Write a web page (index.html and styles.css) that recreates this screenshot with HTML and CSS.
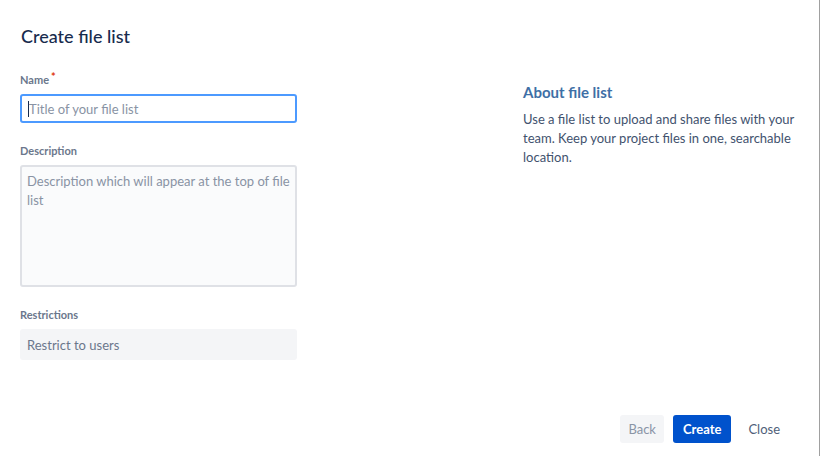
FILE: index.html
```html
<!DOCTYPE html>
<html>
<head>
<meta charset="utf-8">
<link rel="stylesheet" href="styles.css">
</head>
<body>
<div class="dialog">
  <div class="main">
    <div class="left">
      <h1 class="title">Create file list</h1>
      <div class="field">
        <label class="label">Name<span class="req">*</span></label>
        <div class="input focused"><span class="caret"></span><span class="ph">Title of your file list</span></div>
      </div>
      <div class="field">
        <label class="label">Description</label>
        <div class="textarea"><span class="ph">Description which will appear at the top of file list</span></div>
      </div>
      <div class="field">
        <label class="label">Restrictions</label>
        <div class="select"><span class="ph2">Restrict to users</span></div>
      </div>
    </div>
    <div class="right">
      <h2 class="about">About file list</h2>
      <p class="desc">Use a file list to upload and share files with your team. Keep your project files in one, searchable location.</p>
    </div>
  </div>
  <div class="footer">
    <button class="btn back">Back</button>
    <button class="btn create">Create</button>
    <button class="btn close">Close</button>
  </div>
</div>
</body>
</html>
```
FILE: styles.css
```css
html, body {
  margin: 0;
  padding: 0;
  background: #ffffff;
}
body {
  font-family: Lato, "Open Sans", "Liberation Sans", sans-serif;
  color: #172b4d;
}
.dialog {
  width: 820px;
  height: 456px;
  box-sizing: border-box;
  border-right: 1px solid #a0a0a0;
  display: flex;
  flex-direction: column;
}
.main {
  flex: 1;
  display: grid;
  grid-template-columns: 277px 272px;
  column-gap: 226px;
  padding: 0 20px;
}
.title {
  margin: 24px 0 0 1px;
  font-size: 18px;
  line-height: 24px;
  font-weight: 500;
  color: #172b4d;
}
.field {
  margin-top: 24px;
}
.field + .field {
  margin-top: 20px;
}
.label {
  display: block;
  font-size: 11px;
  line-height: 16px;
  font-weight: 700;
  color: #6b778c;
  margin-bottom: 6px;
}
.req {
  color: #de350b;
  margin-left: 2px;
  position: relative;
  top: -3px;
}
.input {
  height: 29px;
  box-sizing: border-box;
  border: 2px solid #4c9aff;
  border-radius: 3px;
  display: flex;
  align-items: center;
  padding: 0 6px;
}
.caret {
  width: 1px;
  height: 16px;
  background: #172b4d;
}
.ph {
  font-size: 13px;
  color: #8993a4;
}
.textarea {
  height: 122px;
  box-sizing: border-box;
  border: 2px solid #dfe1e6;
  border-radius: 3px;
  background: #fafbfc;
  padding: 4px 5px;
  line-height: 18px;
}
.select {
  height: 31px;
  background: #f4f5f7;
  border-radius: 3px;
  display: flex;
  align-items: center;
  padding: 0 7px;
}
.ph2 {
  font-size: 13px;
  color: #6b778c;
}
.right {
  padding-top: 82px;
}
.about {
  margin: 0;
  font-size: 15px;
  line-height: 20px;
  font-weight: 700;
  color: #3e6fa6;
}
.desc {
  margin: 8px 0 0;
  font-size: 13px;
  line-height: 19px;
  color: #42526e;
}
.footer {
  display: flex;
  justify-content: flex-end;
  gap: 9px;
  padding: 0 31px 13px 0;
}
.btn {
  font-family: inherit;
  font-size: 13px;
  height: 28px;
  border: none;
  border-radius: 3px;
  padding: 0 8px;
  background: transparent;
}
.back {
  background: #f4f5f7;
  color: #8a94a6;
}
.create {
  background: #0052cc;
  color: #ffffff;
  font-weight: 700;
  padding: 0 10px;
}
.close {
  color: #505f79;
}
```
